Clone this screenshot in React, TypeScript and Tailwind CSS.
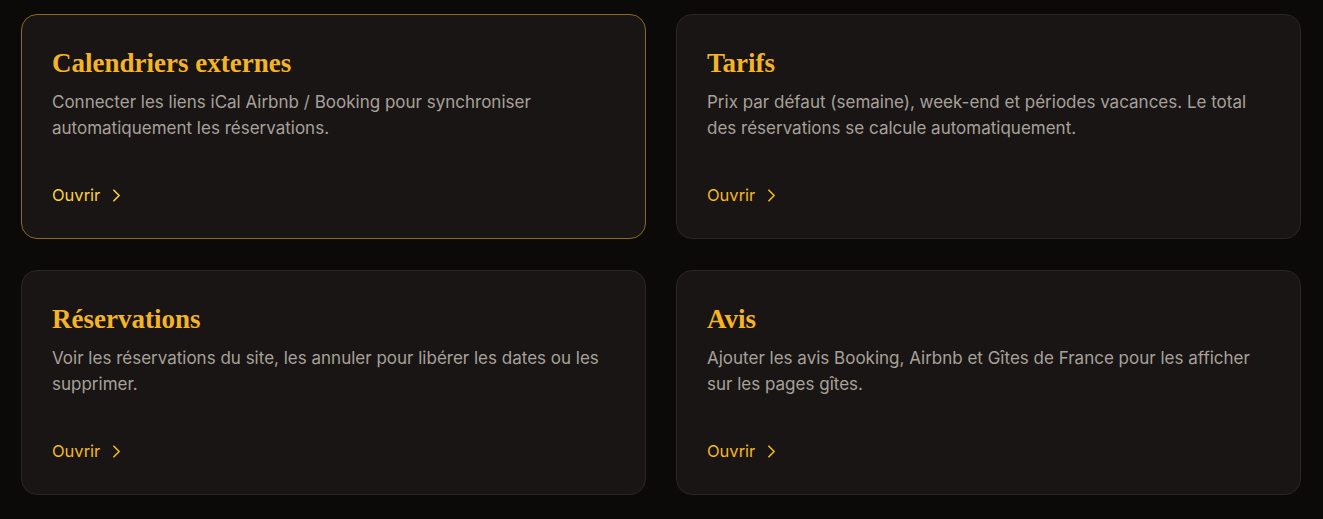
import React from "react";

const cards = [
  {
    title: "Calendriers externes",
    text: "Connecter les liens iCal Airbnb / Booking pour synchroniser automatiquement les réservations.",
    active: true,
  },
  {
    title: "Tarifs",
    text: "Prix par défaut (semaine), week-end et périodes vacances. Le total des réservations se calcule automatiquement.",
    active: false,
  },
  {
    title: "Réservations",
    text: "Voir les réservations du site, les annuler pour libérer les dates ou les supprimer.",
    active: false,
  },
  {
    title: "Avis",
    text: "Ajouter les avis Booking, Airbnb et Gîtes de France pour les afficher sur les pages gîtes.",
    active: false,
  },
];

function Chevron() {
  return (
    <svg width="21" height="21" viewBox="0 0 24 24" fill="none" stroke="currentColor" strokeWidth="1.9" strokeLinecap="round" strokeLinejoin="round">
      <path d="m9 18 6-6-6-6" />
    </svg>
  );
}

export default function App() {
  return (
    <div className="min-h-[519px] bg-[#0b0a09] pl-[21px] pr-[22px] pt-[14px] pb-[25px]">
      <div className="grid grid-cols-2 gap-x-[30px] gap-y-[31px]">
        {cards.map((c) => (
          <div
            key={c.title}
            className={`flex h-[225px] flex-col rounded-2xl border bg-[#181514] px-[30px] pt-[30px] pb-[30px] ${
              c.active ? "border-[#8a6a1e]" : "border-[#2a2624]"
            }`}
          >
            <h2 className="font-['Liberation_Serif',serif] text-[27px] font-bold leading-[36px] text-[#f4b425]">
              {c.title}
            </h2>
            <p className="mt-[9px] font-['Inter',sans-serif] text-[17px] leading-[25.5px] text-[#a8a19a]">
              {c.text}
            </p>
            <div
              className={`mt-auto flex items-center gap-[6px] font-['Inter',sans-serif] text-[16.5px] leading-[26px] ${
                c.active ? "text-[#fcd03a]" : "text-[#f5b722]"
              }`}
            >
              <span>Ouvrir</span>
              <Chevron />
            </div>
          </div>
        ))}
      </div>
    </div>
  );
}
